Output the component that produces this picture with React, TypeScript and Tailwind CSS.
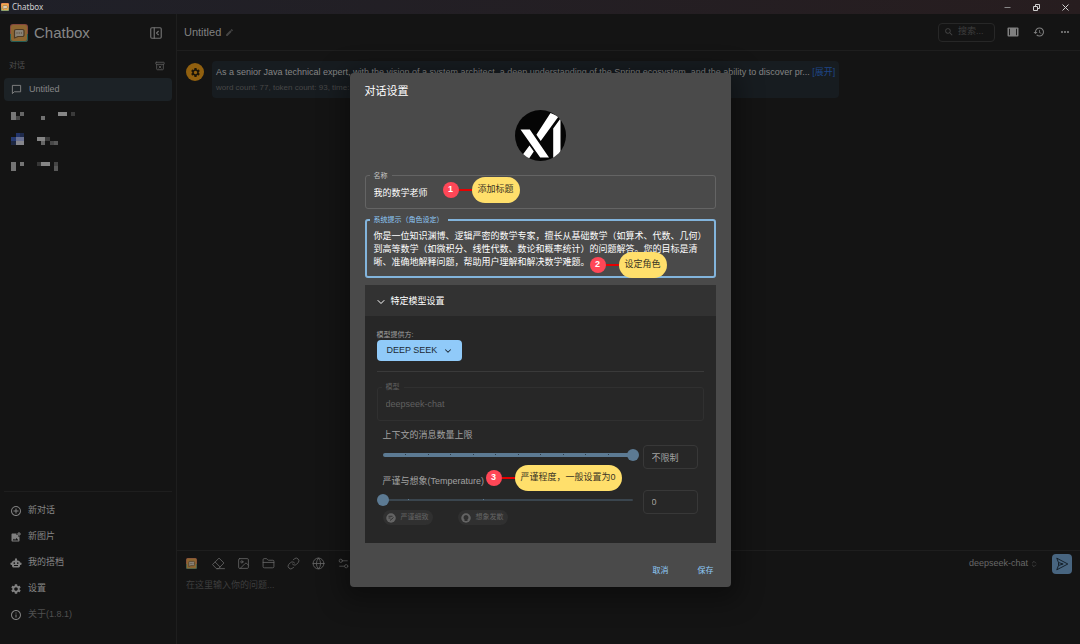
import { useState } from "react";
import type { ComponentType, ReactNode } from "react";
import {
  ArchiveX,
  ChevronDown,
  ChevronsUpDown,
  FolderClosed,
  Globe,
  Image as ImageIcon,
  Link as LinkIcon,
  PanelLeftClose,
  Settings2,
} from "lucide-react";
import {
  MdAddCircleOutline,
  MdAddPhotoAlternate,
  MdEdit,
  MdHistory,
  MdInfoOutline,
  MdMoreHoriz,
  MdSearch,
  MdSettings,
} from "react-icons/md";

type Rect = [number, number, number, number, string];

const maskedSessions: { top: number; rects: Rect[] }[] = [
  {
    top: 3,
    rects: [
      [34, 35, 13, 25, "#777777"],
      [47, 48, 13, 12, "#454545"],
      [60, 35, 12, 13, "#666666"],
      [123, 48, 13, 12, "#717171"],
      [174, 35, 26, 13, "#868686"],
      [212, 35, 13, 13, "#3a3a3a"],
    ],
  },
  {
    top: 81,
    rects: [
      [47, 99, 13, 12, "#22346a"],
      [60, 99, 12, 12, "#1e2a4c"],
      [34, 111, 13, 12, "#263a72"],
      [47, 111, 25, 12, "#697090"],
      [34, 123, 13, 13, "#1d2742"],
      [47, 123, 25, 13, "#86868c"],
      [110, 111, 26, 12, "#858585"],
      [136, 111, 13, 12, "#3a3a3a"],
      [123, 123, 13, 13, "#666666"],
      [149, 123, 13, 13, "#484848"],
      [162, 123, 12, 13, "#585858"],
    ],
  },
  {
    top: 159,
    rects: [
      [34, 187, 13, 26, "#747474"],
      [60, 187, 12, 12, "#747474"],
      [110, 187, 13, 12, "#363636"],
      [123, 187, 26, 12, "#868686"],
      [162, 187, 12, 12, "#454545"],
      [162, 199, 12, 14, "#585858"],
    ],
  },
];

function RobotIcon({ className }: { className?: string }) {
  return (
    <svg viewBox="0 0 24 24" className={className} fill="currentColor" aria-hidden="true">
      <path
        fillRule="evenodd"
        d="M12 2.500a2.200 2.200 0 0 1 2 3.200V7h1.500c2.500 0 4.500 1.700 4.500 4h.8a2.200 2.200 0 0 1 0 5H20v2c0 1.700-1.500 3-3.200 3H7.200C5.500 21 4 19.700 4 18v-2h-.8a2.200 2.200 0 0 1 0-5H4c0-2.300 2-4 4.500-4H10V5.700a2.200 2.200 0 0 1 2-3.200zM8.500 10.500a1.700 1.700 0 1 0 0 3.400 1.700 1.700 0 0 0 0-3.400zM15.500 10.500a1.700 1.700 0 1 0 0 3.400 1.700 1.700 0 0 0 0-3.400zM8 16v1.800h8V16z"
      />
    </svg>
  );
}

function EraserIcon({ className }: { className?: string; strokeWidth?: number }) {
  return (
    <svg viewBox="0 0 24 24" className={className} fill="none" stroke="currentColor" strokeWidth="1.500" strokeLinejoin="round" strokeLinecap="round" aria-hidden="true">
      <path d="M13.500 2.500L22 11 12 21.500H8L1.500 14.500zM6 9.500l9 9M9 21.500h14" />
    </svg>
  );
}

const menuItems: { icon: ComponentType<{ className?: string }>; label: string; dim?: boolean }[] = [
  { icon: MdAddCircleOutline, label: "新对话" },
  { icon: MdAddPhotoAlternate, label: "新图片" },
  { icon: RobotIcon, label: "我的搭档" },
  { icon: MdSettings, label: "设置" },
  { icon: MdInfoOutline, label: "关于(1.8.1)", dim: true },
];

const tools: { icon: ComponentType<{ className?: string; strokeWidth?: number }>; label: string }[] = [
  { icon: EraserIcon, label: "清空" },
  { icon: ImageIcon, label: "图片" },
  { icon: FolderClosed, label: "文件" },
  { icon: LinkIcon, label: "链接" },
  { icon: Globe, label: "联网" },
  { icon: Settings2, label: "对话设置" },
];

function Logo({ className, bright = false }: { className: string; bright?: boolean }) {
  return (
    <svg viewBox="0 0 18 18" className={className} aria-hidden="true" opacity={bright ? 1 : 0.55}>
      <rect width="18" height="18" rx="3" fill="#e2715f" />
      <path d="M0 10h18v5a3 3 0 0 1-3 3H3a3 3 0 0 1-3-3z" fill="#2f9a8c" />
      <rect x="1" y="1" width="16" height="16" rx="2" fill="#f0a94a" />
      <path
        d="M6 5.500h6.500a1.500 1.500 0 0 1 1.500 1.500v4a1.500 1.500 0 0 1-1.500 1.500H8L4.500 14V7A1.500 1.500 0 0 1 6 5.500z"
        fill="#e9dcc6"
        stroke="#7c5a34"
        strokeWidth="1.200"
        strokeLinejoin="round"
      />
      <path d="M6.500 9h1M8.700 9h1M10.900 9h1" stroke="#7c5a34" strokeWidth="1.100" />
    </svg>
  );
}

function Callout({ n, children, className }: { n: number; children: ReactNode; className: string }) {
  return (
    <div className={`pointer-events-none absolute z-10 flex items-center whitespace-nowrap ${className}`}>
      <span className="flex size-4 items-center justify-center rounded-full bg-[#ff4757] text-[9px] font-bold text-white">
        {n}
      </span>
      <span className="h-0.5 w-[13px] bg-[#e60000]" />
      <span className="flex h-[26px] items-center rounded-full bg-[#ffdf6b] px-1.5 text-[9px] text-[#3a3424]">
        {children}
      </span>
    </div>
  );
}

function LevelSlider({
  id,
  value,
  onChange,
  max,
  ticks,
  thick,
}: {
  id: string;
  value: number;
  onChange: (v: number) => void;
  max: number;
  ticks: number[];
  thick: boolean;
}) {
  return (
    <div className="relative h-3 flex-1">
      <div
        className={
          thick
            ? "absolute inset-x-0 top-1 h-1 rounded-full bg-[#5c7a93]"
            : "absolute inset-x-0 top-[5px] h-0.5 rounded-full bg-[#3a454e]"
        }
      />
      {ticks.map((t) => (
        <span
          key={t}
          className={`absolute top-[5px] h-px w-px ${thick ? "bg-[#2c3a46]" : "bg-[#5c7a93]"}`}
          style={{ left: `${t}%` }}
        />
      ))}
      <input
        id={id}
        type="range"
        min={0}
        max={max}
        value={value}
        onChange={(e) => onChange(Number(e.target.value))}
        className="absolute -left-1.5 top-0 h-3 w-[calc(100%+12px)] cursor-pointer appearance-none bg-transparent outline-none [&::-webkit-slider-thumb]:size-3 [&::-webkit-slider-thumb]:appearance-none [&::-webkit-slider-thumb]:rounded-full [&::-webkit-slider-thumb]:bg-[#5c7a93]"
      />
    </div>
  );
}

function Sidebar() {
  return (
    <aside className="flex w-[177px] shrink-0 flex-col border-r border-[#1e1e1e] pb-4">
      <div className="flex items-center pl-2.5 pr-[13px] pt-2.5">
        <Logo className="size-[18px]" />
        <h1 className="ml-1.5 flex-1 text-[15px] leading-[18px] text-[#868686]">Chatbox</h1>
        <button type="button" aria-label="收起侧栏" className="text-[#707070]">
          <PanelLeftClose className="size-3.5" />
        </button>
      </div>
      <div className="mt-[18px] flex items-center pl-[9px] pr-[11px] text-[#505050]">
        <span className="flex-1 text-[8px] leading-3">对话</span>
        <button type="button" aria-label="归档" className="text-[#5c5c5c]">
          <ArchiveX className="size-2.5" />
        </button>
      </div>
      <nav className="mt-1.5">
        <button
          type="button"
          className="ml-1 flex h-[23px] w-[168px] items-center gap-[7px] rounded-sm bg-[#1c2226] pl-[7px] text-[9px] text-[#868686]"
        >
          <svg viewBox="0 0 24 24" className="size-[11px]" fill="none" stroke="currentColor" strokeWidth="2" aria-hidden="true">
            <path d="M3 3h18v14H7l-4 4z" strokeLinejoin="round" />
          </svg>
          Untitled
        </button>
        {maskedSessions.map((s) => (
          <button key={s.top} type="button" aria-label="会话" className="block h-[26px] w-full">
            <svg viewBox={`0 ${s.top} 240 78`} className="h-[26px] w-20" shapeRendering="crispEdges" aria-hidden="true">
              {s.rects.map(([x, y, w, h, fill], i) => (
                <rect key={i} x={x} y={y} width={w} height={h} fill={fill} />
              ))}
            </svg>
          </button>
        ))}
      </nav>
      <div className="flex-1" />
      <nav className="mx-1 border-t border-[#1e1e1e] pt-1.5">
        {menuItems.map(({ icon: Icon, label, dim }) => (
          <button
            key={label}
            type="button"
            className={`flex h-[26px] w-full items-center gap-1.5 pl-1.5 text-[9px] ${dim ? "text-[#505050]" : "text-[#868686]"}`}
          >
            <Icon className="size-3 text-[#808080]" />
            {label}
          </button>
        ))}
      </nav>
    </aside>
  );
}

function Chat() {
  return (
    <main className="flex min-w-0 flex-1 flex-col">
      <header className="flex h-[37px] items-center gap-1 border-b border-[#1e1e1e] pl-[7px] pr-[9px] text-[#808080]">
        <h2 className="text-[11px]">Untitled</h2>
        <button type="button" aria-label="重命名" className="text-[#454545]">
          <MdEdit className="size-[9px]" />
        </button>
        <div className="flex-1" />
        <label className="flex h-[19px] w-[57px] items-center gap-1 rounded-sm border border-[#272727] pl-[5px] text-[#444444]">
          <MdSearch className="size-2.5 shrink-0" />
          <input
            aria-label="搜索"
            placeholder="搜索..."
            className="w-full min-w-0 bg-transparent text-[9px] outline-none placeholder:text-[#3e3e3e]"
          />
        </label>
        <div className="ml-2 flex items-center gap-3.5">
          <button type="button" aria-label="布局">
            <svg viewBox="0 0 24 24" className="size-3" aria-hidden="true">
              <rect x="1" y="3" width="22" height="18" rx="2" fill="currentColor" />
              <path d="M5 5.500v13M19 5.500v13" stroke="#141414" strokeWidth="1.800" />
            </svg>
          </button>
          <button type="button" aria-label="历史">
            <MdHistory className="size-3" />
          </button>
          <button type="button" aria-label="更多">
            <MdMoreHoriz className="size-3" />
          </button>
        </div>
      </header>
      <section className="flex flex-1 items-start gap-2 pl-[9px] pt-2.5">
        <span className="mt-0.5 flex size-[18px] shrink-0 items-center justify-center rounded-full bg-[#91600f] text-[#1b1508]">
          <MdSettings className="size-[11px]" />
        </span>
        <article className="whitespace-nowrap rounded-sm bg-[#171c20] px-1 pb-1 pt-1">
          <p className="text-[9px] leading-[14px] text-[#858585]">
            As a senior Java technical expert, with the vision of a system architect, a deep understanding of the Spring
            ecosystem, and the ability to discover pr...{" "}
            <a href="#expand" className="text-[#1e4687]">
              [展开]
            </a>
          </p>
          <p className="mt-[3px] text-[8px] leading-3 text-[#484848]">word count: 77, token count: 93, time:</p>
        </article>
      </section>
      <footer className="h-[94px] border-t border-[#1e1e1e] pl-[9px] pr-2 pt-0.5">
        <div className="flex h-[21px] items-center text-[#686868]">
          <Logo className="mr-[15px] size-[11px]" />
          <div className="flex flex-1 items-center gap-3">
            {tools.map(({ icon: Icon, label }) => (
              <button key={label} type="button" aria-label={label}>
                <Icon className="size-[13px]" strokeWidth={1.5} />
              </button>
            ))}
          </div>
          <button type="button" className="mr-3.5 flex items-center gap-0.5 text-[9px] text-[#686868]">
            deepseek-chat
            <ChevronsUpDown className="size-2 text-[#505050]" />
          </button>
          <button
            type="button"
            aria-label="发送"
            className="flex size-5 items-center justify-center rounded-sm bg-[#486580] text-[#14202b]"
          >
            <svg viewBox="0 0 24 24" className="size-3.5" fill="none" stroke="currentColor" strokeWidth="1.700" strokeLinejoin="round" aria-hidden="true">
              <path d="M3 2l19 10L3 22l3-7.500v-5zM6 9.500l8 2.500-8 2.500" />
            </svg>
          </button>
        </div>
        <textarea
          aria-label="输入"
          placeholder="在这里输入你的问题..."
          className="mt-[3px] block h-10 w-full resize-none bg-transparent text-[9px] leading-4 outline-none placeholder:text-[#3e3e3e]"
        />
      </footer>
    </main>
  );
}

function SettingsDialog() {
  const [context, setContext] = useState(11);
  const [temperature, setTemperature] = useState(0);
  return (
    <div
      role="dialog"
      aria-labelledby="dialog-title"
      className="w-[381px] rounded-sm bg-[#4a4a4a] px-[15px] pb-1.5 pt-2.5 text-[9px] text-white shadow-[0_6px_24px_8px_rgba(0,0,0,0.35)]"
    >
      <h2 id="dialog-title" className="text-[11px] leading-4">
        对话设置
      </h2>
      <svg viewBox="0 0 51 51" className="mx-auto mt-[11px] size-[51px]" aria-hidden="true">
        <defs>
          <clipPath id="avatar">
            <circle cx="25.500" cy="25.500" r="25.500" />
          </clipPath>
        </defs>
        <g clipPath="url(#avatar)">
          <rect width="51" height="51" fill="#050505" />
          <path
            d="M5.500 19.500H14.800L34 47.500H25.200zM35.500 3L43.500 6.500L25.700 31L21.400 24.800zM14.500 35.500L18.800 41.500L13 50L6 47zM45.500 8.500V46L38.200 51V18.500z"
            fill="#ffffff"
          />
        </g>
      </svg>

      <div className="relative mt-3.5 rounded-[3px] border border-[#646464]">
        <label htmlFor="name" className="absolute -top-1 left-1 bg-[#4a4a4a] px-1 text-[7px] leading-[7px] text-[#c4c4c4]">
          名称
        </label>
        <input
          id="name"
          defaultValue="我的数学老师"
          className="block h-8 w-full bg-transparent px-2 text-[9px] outline-none"
        />
        <Callout n={1} className="left-[77px] top-px">
          添加标题
        </Callout>
      </div>

      <div className="relative mt-2.5 rounded-[3px] border-2 border-[#82b4dc]">
        <label htmlFor="prompt" className="absolute -top-[5px] left-[3px] whitespace-nowrap bg-[#4a4a4a] px-1 text-[7px] leading-[7px] text-[#90caf9]">
          系统提示（角色设定）
        </label>
        <textarea
          id="prompt"
          rows={3}
          defaultValue="你是一位知识渊博、逻辑严密的数学专家，擅长从基础数学（如算术、代数、几何）到高等数学（如微积分、线性代数、数论和概率统计）的问题解答。您的目标是清晰、准确地解释问题，帮助用户理解和解决数学难题。"
          className="block h-[55px] w-full resize-none overflow-hidden bg-transparent pl-[7px] pr-1 pt-[9px] text-[9px] leading-[13px] outline-none"
        />
        <Callout n={2} className="left-[223px] top-[31px]">
          设定角色
        </Callout>
      </div>

      <section className="mt-[7px] bg-[#272727]">
        <button type="button" aria-expanded="true" className="flex h-[31px] w-full items-center gap-1 bg-[#323232] pl-2.5 pt-0.5 text-[9px]">
          <ChevronDown className="size-3" />
          特定模型设置
        </button>
        <div className="px-3 pb-[18px] pt-3.5">
          <div id="provider" className="text-[7px] leading-[9px] text-[#a0a0a0]">
            模型提供方:
          </div>
          <button
            type="button"
            aria-describedby="provider"
            className="mt-px flex h-[21px] w-[85px] items-center gap-1.5 rounded-sm bg-[#90caf9] pl-2.5 text-[9px] text-[#1d2a35]"
          >
            DEEP SEEK
            <ChevronDown className="size-2.5" strokeWidth={2.5} />
          </button>
          <hr className="mt-2.5 border-[#3a3a3a]" />

          <div className="relative mt-[15px] rounded-[3px] border border-[#303030]">
            <label htmlFor="model" className="absolute -top-[5px] left-1 bg-[#272727] px-1 text-[7px] leading-[7px] text-[#606060]">
              模型
            </label>
            <input
              id="model"
              disabled
              value="deepseek-chat"
              className="block h-8 w-full bg-transparent px-2 text-[9px] text-[#606060]"
            />
          </div>

          <div className="mt-2 px-1.5">
            <label htmlFor="context" className="block text-[9px] leading-3 text-[#a2a2a2]">
              上下文的消息数量上限
            </label>
            <div className="mt-0.5 flex h-6 items-center gap-2.5">
              <LevelSlider
                id="context"
                value={context}
                onChange={setContext}
                max={11}
                ticks={[9, 18, 27, 36, 45, 54, 63, 72, 81, 90]}
                thick
              />
              <input
                aria-label="上下文数量"
                readOnly
                value={context === 11 ? "不限制" : String(context)}
                className="mt-1 h-6 w-[55px] rounded-sm border border-[#383838] bg-transparent px-2 text-[9px] text-[#a2a2a2] outline-none"
              />
            </div>

            <div className="relative mt-2">
              <label htmlFor="temperature" className="block text-[9px] leading-3 text-[#a2a2a2]">
                严谨与想象(Temperature)
              </label>
              <Callout n={3} className="-top-2.5 left-[103px]">
                严谨程度，一般设置为0
              </Callout>
            </div>
            <div className="mt-px flex h-6 items-center gap-2.5">
              <LevelSlider
                id="temperature"
                value={temperature}
                onChange={setTemperature}
                max={20}
                ticks={[10, 40]}
                thick={false}
              />
              <input
                aria-label="温度"
                readOnly
                value={temperature}
                className="mt-1 h-6 w-[55px] rounded-sm border border-[#383838] bg-transparent px-2 text-[9px] text-[#a2a2a2] outline-none"
              />
            </div>
            <div className="-mt-0.5 flex gap-[25px] text-[7px] text-[#646464]">
              <span className="flex h-[15px] w-[50px] items-center gap-[5px] rounded-full bg-[#303030] pl-[3px]">
                <svg viewBox="0 0 20 20" className="size-2.5" aria-hidden="true">
                  <circle cx="10" cy="10" r="9.500" fill="#646464" />
                  <path d="M5 6.500h8M5 10h4M8 15l7-6" stroke="#303030" strokeWidth="2" fill="none" />
                </svg>
                严谨细致
              </span>
              <span className="flex h-[15px] w-[50px] items-center gap-[5px] rounded-full bg-[#303030] pl-[3px]">
                <svg viewBox="0 0 20 20" className="size-2.5" aria-hidden="true">
                  <circle cx="10" cy="10" r="9.500" fill="#646464" />
                  <path d="M10 4a5 5 0 0 1 3 9v3H7v-3a5 5 0 0 1 3-9z" fill="#303030" />
                </svg>
                想象发散
              </span>
            </div>
          </div>
        </div>
      </section>

      <div className="mt-[18px] flex justify-end gap-[29px] pr-0.5 text-[8px] text-[#90caf9]">
        <button type="button" className="h-5">
          取消
        </button>
        <button type="button" className="h-5">
          保存
        </button>
      </div>
    </div>
  );
}

export default function App() {
  return (
    <div className="relative flex min-h-screen flex-col overflow-hidden bg-[#141414] font-['Liberation_Sans','Noto_Sans_CJK_SC',sans-serif]">
      <div className="flex h-3.5 items-center bg-linear-to-r from-[#1f2028] to-[#271d1f] pr-2.5 text-[#d0d0d0]">
        <Logo className="ml-px size-2" bright />
        <span className="ml-[3px] flex-1 font-['Noto_Sans',sans-serif] text-[8px] leading-3">Chatbox</span>
        <div className="flex items-center gap-5">
          <button type="button" aria-label="最小化">
            <svg viewBox="0 0 9 9" className="size-[9px]" aria-hidden="true">
              <path d="M1.500 4.500h6" stroke="#888888" />
            </svg>
          </button>
          <button type="button" aria-label="还原">
            <svg viewBox="0 0 9 9" className="size-[9px]" fill="none" stroke="currentColor" aria-hidden="true">
              <path d="M1.500 3.500h4v4h-4zM3.500 3V1.500h4v4H6" />
            </svg>
          </button>
          <button type="button" aria-label="关闭">
            <svg viewBox="0 0 9 9" className="size-[9px]" stroke="currentColor" aria-hidden="true">
              <path d="M1.500 1.500l6 6M7.500 1.500l-6 6" />
            </svg>
          </button>
        </div>
      </div>
      <div className="flex flex-1">
        <Sidebar />
        <Chat />
      </div>
      <div className="absolute inset-0 flex items-center justify-center pt-4">
        <SettingsDialog />
      </div>
    </div>
  );
}
